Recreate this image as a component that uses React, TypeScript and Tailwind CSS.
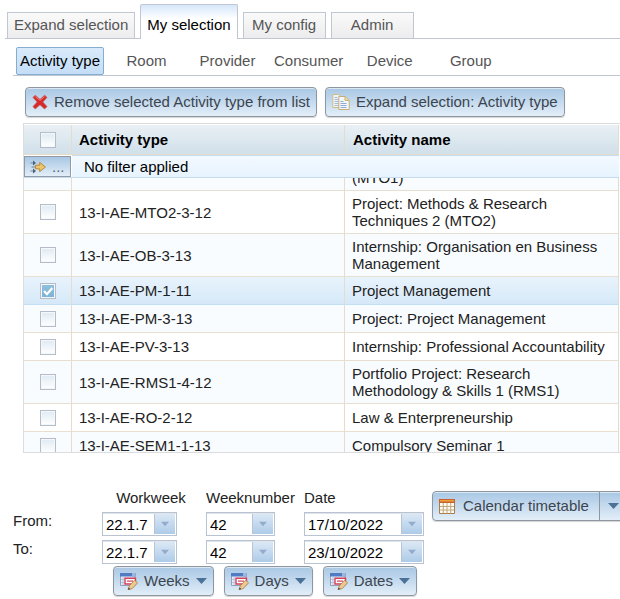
import { useLayoutEffect, useRef, useState } from "react";
import type { ReactNode } from "react";
import clsx from "clsx";

interface Activity {
  id: string;
  name: string;
}

const mainTabs = ["Expand selection", "My selection", "My config", "Admin"];
const typeTabs = ["Activity type", "Room", "Provider", "Consumer", "Device", "Group"];

const activities: Activity[] = [
  { id: "", name: "(MTO1)" },
  { id: "13-I-AE-MTO2-3-12", name: "Project: Methods & Research Techniques 2 (MTO2)" },
  { id: "13-I-AE-OB-3-13", name: "Internship: Organisation en Business Management" },
  { id: "13-I-AE-PM-1-11", name: "Project Management" },
  { id: "13-I-AE-PM-3-13", name: "Project: Project Management" },
  { id: "13-I-AE-PV-3-13", name: "Internship: Professional Accountability" },
  { id: "13-I-AE-RMS1-4-12", name: "Portfolio Project: Research Methodology & Skills 1 (RMS1)" },
  { id: "13-I-AE-RO-2-12", name: "Law & Enterpreneurship" },
  { id: "13-I-AE-SEM1-1-13", name: "Compulsory Seminar 1" },
];

const buttonLook =
  "border border-[#8e979f] bg-linear-to-b from-[#a8c7e4] to-[#e3eef8] text-[#3c454e] shadow-[inset_0_1px_0_#dbe8f4,0_1px_1px_#d4d4d4]";

function RemoveIcon() {
  return (
    <svg width="16" height="16" viewBox="0 0 16 16" className="shrink-0" aria-hidden="true">
      <path
        d="M3.2 1.2 8 5.4l4.6-4.2 2.4 2.2L10.8 8l4.2 4.6-2.4 2.4L8 10.8 3.2 15 1 12.6 5.2 8 1 3.4z"
        fill="#d6292a"
        stroke="#c95a56"
        strokeWidth=".7"
        strokeLinejoin="round"
      />
      <path d="m3.2 2.6 4.8 4 4.6-4" fill="none" stroke="#ef7a74" strokeWidth=".9" />
    </svg>
  );
}

function CopyIcon() {
  return (
    <svg width="18" height="18" viewBox="0 0 18 18" className="shrink-0" aria-hidden="true">
      <path d="M.8 1.5h6l2.4 2.3v10.7H.8z" fill="#eef3fa" stroke="#d2bd80" />
      <path d="M2.5 4.5h3M2.5 6.5h4M2.5 8.5h4M2.5 10.5h4M2.5 12.5h4" stroke="#a9bbd6" />
      <path d="M6.8 3.5h6.4l4 3.8v9.2H6.8z" fill="#f3f6fc" stroke="#c3ae74" />
      <path d="M13 3.8v3.7h3.9" fill="#ecd999" stroke="#c9b373" />
      <path d="M8.5 8.5h3M8.5 10.5h6M8.5 12.5h6M8.5 14.5h6" stroke="#8fabd8" />
    </svg>
  );
}

function FilterIcon() {
  return (
    <svg width="16" height="14" viewBox="0 0 16 14" className="shrink-0" aria-hidden="true">
      <path d="M.5 3H4M.5 11H4M1.5 7h4" stroke="#7386a0" strokeWidth="1.2" />
      <path d="M3 .4 6 3 3 5.6zM3 8.4 6 11l-3 2.6z" fill="#4c6078" />
      <path d="M5.5 5.2h4.2V2.4L15.4 7l-5.7 4.6V8.8H5.5z" fill="#f0c469" stroke="#b98a36" strokeLinejoin="round" />
    </svg>
  );
}

function CalendarIcon() {
  return (
    <svg width="16" height="15" viewBox="0 0 16 15" className="shrink-0" aria-hidden="true">
      <path d="M.5.5h15v14H.5z" fill="#fdfbf4" stroke="#a97c4c" />
      <path d="M0 0h16v4H0z" fill="#c5642a" />
      <path d="M1 1h14v1.5H1z" fill="#f0a040" />
      <path d="M1 7.5h14M1 11h14M4.3 4v10.5M8 4v10.5M11.7 4v10.5" stroke="#c3a77b" />
    </svg>
  );
}

function EditRangeIcon() {
  return (
    <svg width="18" height="17" viewBox="0 0 18 17" className="shrink-0" aria-hidden="true">
      <path d="M.5.5H15v12H.5z" fill="#e9eff9" stroke="#8fa0c0" />
      <path d="M0 0h15.5v3.5H0z" fill="#4f7cc2" />
      <path d="M12 0h3.5v3.5H12z" fill="#9fb4d8" />
      <path d="M1 6.5h3.5M1 9.5h3.5M3 4v8" stroke="#b6c4dc" />
      <path d="M5 5.2h10.5V11H5z" fill="#fff" stroke="#d2405a" strokeWidth="1.4" />
      <path d="M7 8.1h6" stroke="#d2405a" strokeWidth="1.2" />
      <path
        d="m14.6 7.2 3 2.5-5.2 5.8L8 16.8l1.3-3.9z"
        fill="#ecc98d"
        stroke="#a87f4f"
        strokeWidth=".8"
      />
      <path d="m8 16.8.6-2.2 1.7 1.5z" fill="#4b4036" />
    </svg>
  );
}

function Arrow({ className }: { className: string }) {
  return (
    <svg width="11" height="6" viewBox="0 0 11 6" className={clsx("shrink-0", className)} aria-hidden="true">
      <path d="M0 0h11L5.5 6z" fill="currentColor" />
    </svg>
  );
}

function ToolButton({ icon, children, menu }: { icon: ReactNode; children: ReactNode; menu?: boolean }) {
  return (
    <button
      type="button"
      className={clsx("flex h-[30px] shrink-0 items-center gap-1.5 rounded-[4px] px-1.5 whitespace-nowrap", buttonLook)}
    >
      {icon}
      {children}
      {menu && <Arrow className="text-[#4b7296]" />}
    </button>
  );
}

function Combo({ label, value, width }: { label: string; value: string; width: string }) {
  return (
    <div className={clsx("flex h-6 border border-[#b9c3d1] bg-white p-px shadow-[inset_0_1px_0_#dfe4ea]", width)}>
      <input
        type="text"
        aria-label={label}
        defaultValue={value}
        className="w-0 flex-1 border-r border-[#b9c3d1] pl-0.5 text-black outline-none"
      />
      <button
        type="button"
        aria-label={`Open ${label}`}
        className="flex w-5 items-center justify-center bg-linear-to-b from-[#dbe8f5] to-[#adcbe8]"
      >
        <Arrow className="w-2 text-[#93acce]" />
      </button>
    </div>
  );
}

function TickBox({ label, checked, onChange }: { label: string; checked: boolean; onChange: () => void }) {
  return (
    <label className="relative mx-auto block size-4">
      <input
        type="checkbox"
        aria-label={label}
        checked={checked}
        onChange={onChange}
        className="block size-4 appearance-none border border-[#b4bcc9] bg-linear-to-b from-[#dfeaf2] to-white shadow-[inset_0_0_0_1px_#f5f8fa] checked:from-[#8fc0de] checked:to-[#7cb2d6]"
      />
      {checked && (
        <svg viewBox="0 0 16 16" className="pointer-events-none absolute inset-0" aria-hidden="true">
          <path d="m4 8 3 3.2L12.3 5" fill="none" stroke="#fff" strokeWidth="2.2" />
        </svg>
      )}
    </label>
  );
}

function Columns() {
  return (
    <colgroup>
      <col className="w-12" />
      <col className="w-[273px]" />
      <col />
    </colgroup>
  );
}

const tableLook = "w-full table-fixed border-separate border-spacing-0 text-left leading-[17px]";
const headCell = "border-r border-b border-[#e5dccb]";

function ActivityTable() {
  const [selected, setSelected] = useState<string[]>(["13-I-AE-PM-1-11"]);
  const scroller = useRef<HTMLDivElement>(null);

  // Start part way down the first row
  useLayoutEffect(() => {
    if (scroller.current) scroller.current.scrollTop = 13;
  }, []);

  const toggle = (id: string) =>
    setSelected((prev) => (prev.includes(id) ? prev.filter((item) => item !== id) : [...prev, id]));

  const allSelected = selected.length === activities.length;

  return (
    <div className="mt-1.5 ml-[23px] border border-r-0 border-[#dcdcdc] pt-px pr-px">
      <table className={tableLook}>
        <Columns />
        <thead>
          <tr className="h-[30px] bg-linear-to-b from-[#e9f0f5] to-[#d0dfe9] text-black">
            <th className={headCell}>
              <TickBox
                label="Select all"
                checked={allSelected}
                onChange={() => setSelected(allSelected ? [] : activities.map((a) => a.id))}
              />
            </th>
            <th className={clsx(headCell, "px-[7px]")}>Activity type</th>
            <th className={clsx(headCell, "px-2")}>Activity name</th>
          </tr>
          <tr className="h-[23px] bg-linear-to-b from-[#f3f9ff] to-[#e6f3fe]">
            <td className="border-b border-[#c5dcf0] bg-white pt-px pr-px">
              <button
                type="button"
                aria-label="Filter"
                className="flex h-[21px] w-full items-center gap-1.5 border border-[#929aa3] bg-linear-to-b from-[#a8c7e4] to-[#e3eef8] px-[5px] text-[#5d6872]"
              >
                <FilterIcon />
                ...
              </button>
            </td>
            <td colSpan={2} className="border-t border-b border-[#c5dcf0] px-3 text-black">
              No filter applied
            </td>
          </tr>
        </thead>
      </table>

      <div ref={scroller} className="h-[274px] overflow-hidden">
        <table className={tableLook}>
          <Columns />
          <tbody>
            {activities.map((activity, i) => {
              const isSelected = selected.includes(activity.id);
              const cell = clsx(
                "border-r border-b border-r-[#e5dccf]",
                isSelected ? "border-b-[#c3dff3]" : "border-b-[#e8dfd0]",
              );
              return (
                <tr
                  key={activity.name}
                  className={clsx(
                    isSelected && "bg-linear-to-b from-[#e8f3fc] to-[#d5e8f8]",
                    !isSelected && (i % 2 === 0 ? "bg-[#f8fcff]" : "bg-white"),
                  )}
                >
                  <td className={cell}>
                    {activity.id && (
                      <TickBox label={activity.id} checked={isSelected} onChange={() => toggle(activity.id)} />
                    )}
                  </td>
                  <td className={clsx(cell, "px-[7px] py-[5px]")}>{activity.id}</td>
                  <td className={clsx(cell, "py-1 pr-2 pl-[7px]")}>{activity.name}</td>
                </tr>
              );
            })}
          </tbody>
        </table>
      </div>
    </div>
  );
}

function RangeForm() {
  return (
    <section className="mt-9 flex items-start gap-2">
      <div className="shrink-0">
        <div className="grid grid-cols-[89px_104px_98px_120px] pl-[13px] leading-[17px]">
          <span />
          <span className="w-[98px] text-center">Workweek</span>
          <span>Weeknumber</span>
          <span>Date</span>
          <span className="pt-1.5">From:</span>
          <div className="col-span-3 grid grid-cols-subgrid pt-1.5 pb-1">
            <Combo label="From workweek" value="22.1.7" width="w-[75px]" />
            <Combo label="From weeknumber" value="42" width="w-[69px]" />
            <Combo label="From date" value="17/10/2022" width="w-[120px]" />
          </div>
          <span>To:</span>
          <div className="col-span-3 grid grid-cols-subgrid">
            <Combo label="To workweek" value="22.1.7" width="w-[75px]" />
            <Combo label="To weeknumber" value="42" width="w-[69px]" />
            <Combo label="To date" value="23/10/2022" width="w-[120px]" />
          </div>
        </div>
        <div className="mt-0.5 flex gap-2.5 pl-[113px]">
          <ToolButton icon={<EditRangeIcon />} menu>Weeks</ToolButton>
          <ToolButton icon={<EditRangeIcon />} menu>Days</ToolButton>
          <ToolButton icon={<EditRangeIcon />} menu>Dates</ToolButton>
        </div>
      </div>
      <div className={clsx("mt-0.5 flex h-[30px] shrink-0 rounded-[4px]", buttonLook)}>
        <button type="button" className="flex items-center gap-2 border-r border-[#8e979f] pr-2.5 pl-1.5 whitespace-nowrap">
          <CalendarIcon />
          Calendar timetable
        </button>
        <button type="button" aria-label="More timetables" className="flex w-7 items-center justify-center">
          <Arrow className="text-[#4b7296]" />
        </button>
      </div>
    </section>
  );
}

export default function App() {
  const [mainTab, setMainTab] = useState("My selection");
  const [typeTab, setTypeTab] = useState("Activity type");

  return (
    <main className="overflow-hidden bg-white pt-1 pb-1 font-['Liberation_Sans',Arial,sans-serif] text-[15px] text-[#222]">
      {/* Main tabs */}
      <nav role="tablist" className="ml-[5px] flex h-[35px] items-end gap-[5px] border-b border-[#c0c7d2] pl-0.5">
        {mainTabs.map((tab) => (
          <button
            key={tab}
            type="button"
            role="tab"
            aria-selected={tab === mainTab}
            onClick={() => setMainTab(tab)}
            className={clsx(
              "min-w-[83px] border border-b-0 border-[#c0c7d2] px-1.5 whitespace-nowrap",
              tab === mainTab
                ? "-mb-px h-[35px] rounded-t-[2px] bg-linear-to-b from-[#d5e7fa] to-white to-40% pt-1.5 text-black"
                : "h-[26px] bg-linear-to-b from-[#fafafa] to-[#ececee] text-[#555]",
            )}
          >
            {tab}
          </button>
        ))}
      </nav>

      {/* Object type tabs */}
      <nav role="tablist" className="mt-2 ml-[13px] flex h-[29px] gap-1 border-b border-[#c0c7d2] pl-[3px]">
        {typeTabs.map((tab) => (
          <button
            key={tab}
            type="button"
            role="tab"
            aria-selected={tab === typeTab}
            onClick={() => setTypeTab(tab)}
            className={clsx(
              "h-7 min-w-[77px] rounded-[2px] border px-[3px]",
              tab === typeTab
                ? "border-[#84add0] bg-linear-to-b from-[#d9eafa] to-[#c4def7] text-black"
                : "border-transparent text-[#555]",
            )}
          >
            {tab}
          </button>
        ))}
      </nav>

      <div className="mt-[11px] flex gap-2 pl-[25px]">
        <ToolButton icon={<RemoveIcon />}>Remove selected Activity type from list</ToolButton>
        <ToolButton icon={<CopyIcon />}>Expand selection: Activity type</ToolButton>
      </div>

      <ActivityTable />
      <RangeForm />
    </main>
  );
}
